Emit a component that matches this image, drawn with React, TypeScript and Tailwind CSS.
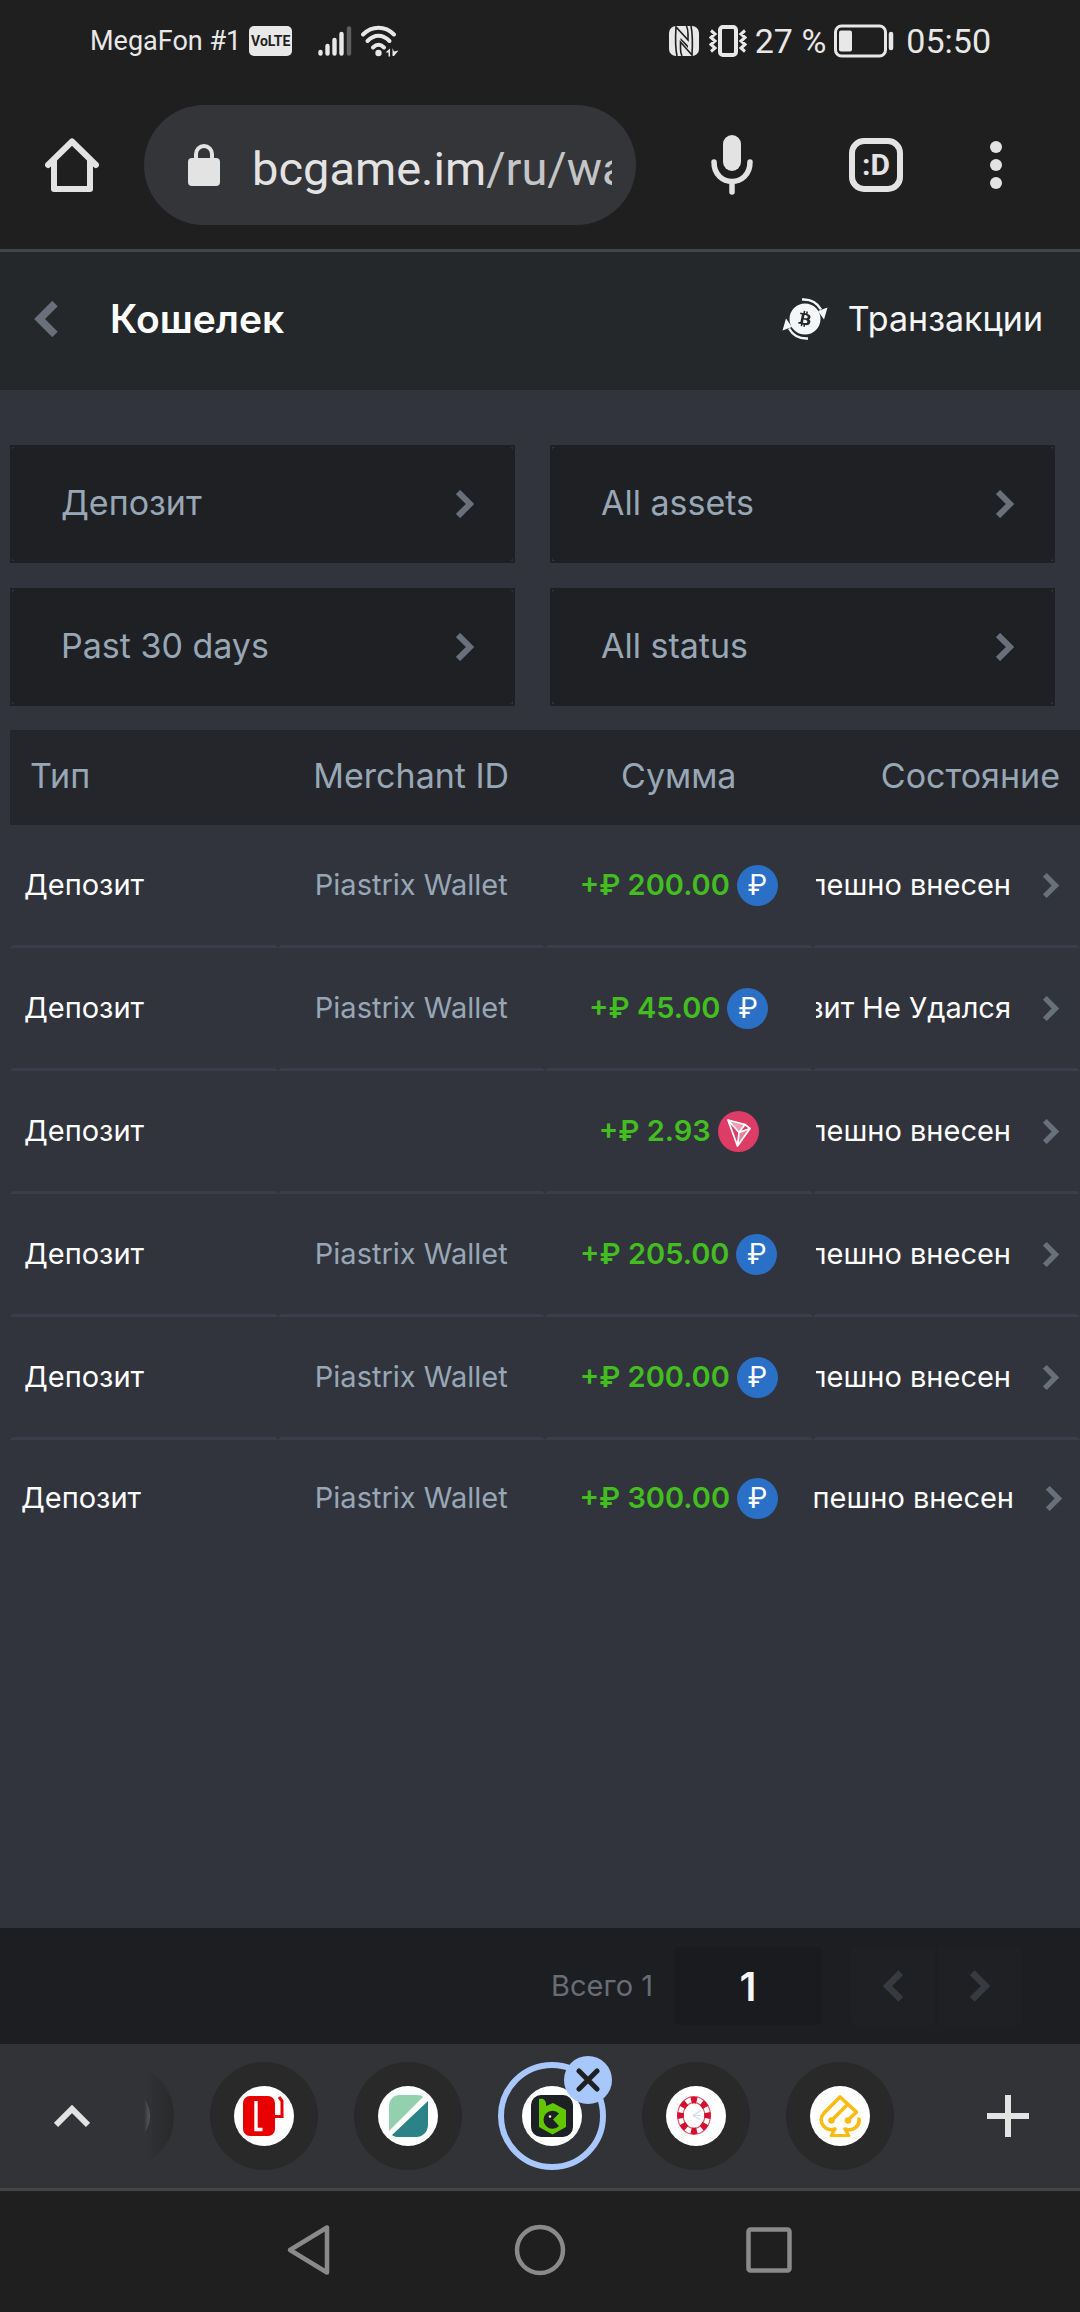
import React from 'react';
import { FaBtc } from 'react-icons/fa';

type Currency = 'rub' | 'trx';

interface Transaction {
  id: number;
  merchant: string;
  amount: string;
  currency: Currency;
  status: string;
}

const transactions: Transaction[] = [
  { id: 1, merchant: 'Piastrix Wallet', amount: '+₽ 200.00', currency: 'rub', status: 'Успешно внесен' },
  { id: 2, merchant: 'Piastrix Wallet', amount: '+₽ 45.00', currency: 'rub', status: 'Депозит Не Удался' },
  { id: 3, merchant: '', amount: '+₽ 2.93', currency: 'trx', status: 'Успешно внесен' },
  { id: 4, merchant: 'Piastrix Wallet', amount: '+₽ 205.00', currency: 'rub', status: 'Успешно внесен' },
  { id: 5, merchant: 'Piastrix Wallet', amount: '+₽ 200.00', currency: 'rub', status: 'Успешно внесен' },
  { id: 6, merchant: 'Piastrix Wallet', amount: '+₽ 300.00', currency: 'rub', status: 'Успешно внесен' },
];

const filters = [
  { name: 'Тип операции', value: 'Депозит' },
  { name: 'Актив', value: 'All assets' },
  { name: 'Период', value: 'Past 30 days' },
  { name: 'Статус', value: 'All status' },
];

const Chevron: React.FC<{ className?: string; left?: boolean }> = ({ className, left }) => (
  <svg viewBox="0 0 18 28" className={className} fill="none" stroke="currentColor" strokeWidth="6" aria-hidden="true">
    <path d={left ? 'M16 2 4 14l12 12' : 'M2 2l12 12L2 26'} />
  </svg>
);

const StatusBar: React.FC = () => (
  <div className="flex h-[57px] items-end justify-between pl-[90px] pr-[89px] text-[#e8e8e8]">
    <div className="flex h-[32px] items-center">
      <span className="text-[27px] leading-8">MegaFon #1</span>
      <span className="ml-2 flex h-[30px] w-[43px] items-center justify-center rounded-[5px] bg-[#e8e8e8] text-[14px] leading-4 font-bold text-[#1f1f1f]">
        VoLTE
      </span>
      <svg className="ml-[26px] h-[32px] w-[34px]" viewBox="0 0 34 32" strokeWidth="4.4" strokeLinecap="round" stroke="currentColor">
        <path d="M2.5 27v1.500M9.500 21v7.500M16.500 15v13.500M23.500 9v19.500" />
        <path d="M31 3.500v25" stroke="#5e5e5e" />
      </svg>
      <svg className="ml-2 h-[32px] w-[40px]" viewBox="0 0 40 32" fill="none" stroke="currentColor" strokeWidth="4" strokeLinecap="round">
        <path d="M3 9.500c9-9 22-9 31 0M7.500 16c7-7 15-7 22 0M13 22.500c3.500-3.500 7.500-3.500 11 0" />
        <circle cx="18.500" cy="28" r="3.200" fill="currentColor" stroke="none" />
        <path d="M25.500 27.500l4.500-4v8h-1.500v-4zM32.500 31v-8l1.500 3.500 4.500-1-4.500 5.500z" fill="currentColor" stroke="none" />
      </svg>
    </div>
    <div className="flex h-[32px] items-center">
      <svg className="h-[32px] w-[32px]" viewBox="0 0 32 32">
        <rect x="1" y="1" width="30" height="30" rx="7" fill="currentColor" />
        <path d="M9 31C7.500 24 7.500 10 8 2l12 13V9c0-3-.5-6-1.500-8M23 1c1.500 7 1.500 21 1 29L12.500 17v7c0 3 .5 5 1.500 7" fill="none" stroke="#1f1f1f" strokeWidth="1.600" />
        <path d="M12.500 13l7.500 7.500v2.500l-7.500-8z" fill="#1f1f1f" />
      </svg>
      <svg className="ml-[9px] h-[32px] w-[38px]" viewBox="0 0 38 32" fill="none" stroke="currentColor" strokeWidth="3">
        <path d="M2 5.500l4 3.500-4 3.500 4 3.500-4 3.500 4 3.500-4 3.500M36 5.500L32 9l4 3.500-4 3.500 4 3.500-4 3.500 4 3.500" />
        <rect x="11" y="2" width="16" height="28" rx="3" strokeWidth="4" />
      </svg>
      <span className="ml-2 text-[34px] leading-8">27 %</span>
      <svg className="ml-2 h-[34px] w-[60px]" viewBox="0 0 60 34" fill="none" stroke="currentColor" strokeWidth="3">
        <rect x="1.500" y="2" width="50" height="30" rx="6" />
        <rect x="5" y="6.500" width="13" height="21" rx="2" fill="currentColor" stroke="none" />
        <path d="M57 10v14" strokeWidth="4.500" strokeLinecap="round" />
      </svg>
      <span className="ml-3 text-[34px] leading-8">05:50</span>
    </div>
  </div>
);

const BrowserBar: React.FC = () => (
  <div className="flex h-[195px] items-center border-b-3 border-[#454545] pt-6 text-[#e3e3e3]">
    <button type="button" aria-label="Home" className="flex w-[144px] shrink-0 justify-center">
      <svg className="h-[54px] w-[54px]" viewBox="0 0 54 54" fill="none" stroke="currentColor" strokeWidth="6" strokeLinejoin="round" strokeLinecap="round">
        <path d="M3 27L27 3.500 51 27M9 22v29h36V22" />
      </svg>
    </button>
    <button type="button" className="flex h-[120px] min-w-0 flex-1 items-center rounded-full bg-[#343539] pr-6 pl-[44px]">
      <svg className="h-[42px] w-[32px] shrink-0" viewBox="0 0 32 42">
        <rect y="14" width="32" height="28" rx="4" fill="currentColor" />
        <path d="M8 15V10a8 8 0 0116 0v5" fill="none" stroke="currentColor" strokeWidth="4" />
      </svg>
      <span className="ml-[32px] overflow-hidden pt-2 text-[47px] leading-[60px] whitespace-nowrap">
        bcgame.im<span className="text-[#c4c5c6]">/ru/wallet</span>
      </span>
    </button>
    <div className="flex shrink-0 items-center pr-9 pl-6">
      <button type="button" aria-label="Voice search" className="flex w-[144px] justify-center">
        <svg className="h-[60px] w-[42px]" viewBox="0 0 42 60" fill="none" stroke="currentColor" strokeWidth="5.500" strokeLinecap="round">
          <rect x="12" width="18" height="36" rx="9" fill="currentColor" stroke="none" />
          <path d="M3 27c0 26 36 26 36 0M21 47v10" />
        </svg>
      </button>
      <button type="button" aria-label="Tabs" className="flex w-[144px] justify-center">
        <span className="flex h-[54px] w-[54px] items-center justify-center rounded-[15px] border-6 border-current text-[30px] leading-8 font-bold">
          :D
        </span>
      </button>
      <button type="button" aria-label="Menu" className="flex w-[96px] justify-center">
        <svg className="h-[48px] w-[12px]" viewBox="0 0 12 48" fill="currentColor">
          <circle cx="6" cy="6" r="6" />
          <circle cx="6" cy="24" r="6" />
          <circle cx="6" cy="42" r="6" />
        </svg>
      </button>
    </div>
  </div>
);

const WalletHeader: React.FC = () => (
  <header className="flex h-[138px] items-center justify-between bg-[#24282b] pr-[37px] pb-1 pl-[34px]">
    <div className="flex items-center gap-[52px]">
      <button type="button" aria-label="Назад" className="text-[#67707b]">
        <Chevron left className="h-[36px] w-[24px]" />
      </button>
      <h1 className="text-[39px] leading-[48px] font-semibold text-white">Кошелек</h1>
    </div>
    <a href="#transactions" className="flex items-center gap-5 text-[34px] leading-[44px] text-[#f5f6f7]">
      <svg className="h-[42px] w-[46px]" viewBox="0 0 46 42">
        <circle cx="23" cy="21" r="15.500" fill="currentColor" />
        <g fill="none" stroke="currentColor" strokeWidth="2.400">
          <path d="M20 1.500c8-.5 15 3 19 10M26 40.500c-8 .5-15-3-19-10" />
        </g>
        <path d="M36 13l9.500-3.500-3.500 12zM10 29L.5 32.500 4 20.500z" fill="currentColor" />
        <g transform="rotate(12 23 21)">
          <FaBtc x="15" y="13" size={16} color="#24282b" />
        </g>
      </svg>
      Транзакции
    </a>
  </header>
);

const FilterSelect: React.FC<{ name: string; value: string }> = ({ name, value }) => (
  <div className="relative border-2 border-[#1f2024] bg-[#34373d]">
    <select
      aria-label={name}
      className="block h-[114px] w-full appearance-none rounded-[4px] bg-[#1f2024] pb-[2px] pl-[49px] text-[34px] leading-[44px] text-[#98a7b5]"
    >
      <option>{value}</option>
    </select>
    <Chevron className="pointer-events-none absolute top-[43px] right-[39px] h-[28px] w-[18px] text-[#67707b]" />
  </div>
);

const CurrencyIcon: React.FC<{ currency: Currency }> = ({ currency }) =>
  currency === 'rub' ? (
    <span className="flex h-[41px] w-[41px] items-center justify-center rounded-full bg-[#2970c6] text-[28px] leading-8 font-normal text-white">
      ₽
    </span>
  ) : (
    <svg className="h-[41px] w-[41px]" viewBox="0 0 41 41">
      <circle cx="20.500" cy="20.500" r="20.500" fill="#dc3c65" />
      <path d="M10 9l18 4-7 8z" fill="#fff" fillOpacity=".5" />
      <path d="M21 21l10-4-11 18z" fill="#fff" fillOpacity=".35" />
      <path d="M10 9l17 4.500 5 4L19.500 35zM10 9l11 12.500L19.500 35M21 21.500l6-8M21 21.500l11-4" fill="none" stroke="#fff" strokeWidth="1.800" strokeLinejoin="round" />
    </svg>
  );

// transparent side borders give the row lines their bevelled breaks
const cell = 'h-[123px] border-x-3 border-b-3 border-x-transparent border-b-[#3b3e4a] p-0 group-last:h-[116px] group-last:border-0';

const TransactionTable: React.FC = () => (
  <table className="w-full table-fixed border-separate border-spacing-0">
    <thead>
      <tr className="h-[95px] bg-[#25262b] text-[34px] leading-[44px] text-[#98a7b5]">
        <th className="p-0 pb-1 pl-5 text-left font-normal">Тип</th>
        <th className="p-0 pb-1 font-normal">Merchant ID</th>
        <th className="p-0 pb-1 font-normal">Сумма</th>
        <th className="p-0 pr-5 pb-1 text-right font-normal">Состояние</th>
      </tr>
    </thead>
    <tbody className="text-[29px] leading-[40px]">
      {transactions.map(tx => (
        <tr key={tx.id} className="group">
          <td className={cell}>
            <span className="pl-[11px] text-white">Депозит</span>
          </td>
          <td className={`${cell} text-center text-[#98a7b5]`}>{tx.merchant}</td>
          <td className={cell}>
            <div className="flex items-center justify-center gap-[7px] font-semibold whitespace-nowrap text-[#43bd20]">
              {tx.amount}
              <CurrencyIcon currency={tx.currency} />
            </div>
          </td>
          <td className={cell}>
            <div className="flex items-center justify-end overflow-hidden pr-[18px] whitespace-nowrap text-white">
              <span>{tx.status}</span>
              <Chevron className="ml-8 h-[25px] w-[16px] shrink-0 text-[#67707b]" />
            </div>
          </td>
        </tr>
      ))}
    </tbody>
  </table>
);

const Pagination: React.FC = () => (
  <div className="flex h-[116px] items-center justify-end bg-[#1d1e22] pr-[58px]">
    <label htmlFor="page" className="text-[29px] leading-[40px] text-[#676d76]">
      Всего 1
    </label>
    <input
      id="page"
      defaultValue="1"
      className="ml-[21px] h-[78px] w-[148px] rounded-[5px] bg-[#1a1b1e] text-center text-[40px] leading-[48px] font-semibold text-[#f5f6f7]"
    />
    <div className="ml-[29px] flex gap-[3px] text-[#373a40]">
      <button type="button" aria-label="Предыдущая страница" className="flex h-[78px] w-[84px] items-center justify-center rounded-l-[5px] bg-[#1f2024]">
        <Chevron left className="h-[32px] w-[20px]" />
      </button>
      <button type="button" aria-label="Следующая страница" className="flex h-[78px] w-[84px] items-center justify-center rounded-r-[5px] bg-[#1f2024]">
        <Chevron className="h-[32px] w-[20px]" />
      </button>
    </div>
  </div>
);

const favicons = {
  lucky: (
    <svg className="h-[42px] w-[42px]" viewBox="0 0 42 42">
      <rect y="1" width="32" height="40" rx="7" fill="#e80000" />
      <path d="M13 6v28.500h6.500" fill="none" stroke="#fff" strokeWidth="3.400" />
      <path d="M30 21.500h9V6l-3-4" fill="none" stroke="#e80000" strokeWidth="3" />
    </svg>
  ),
  leaf: (
    <svg className="h-[42px] w-[42px]" viewBox="0 0 42 42">
      <path d="M2 36V11A11 11 0 0111 0H30q5 0 6 2z" fill="#93d0ae" />
      <path d="M41 6v24a12 12 0 01-12 12H12q-5 0-7-2z" fill="#2b8289" />
    </svg>
  ),
  bcgame: (
    <svg className="h-[42px] w-[42px]" viewBox="0 0 42 42">
      <rect width="42" height="42" rx="10" fill="#1d2024" />
      <path d="M8 4c4-1 7 1 7 5v2l7-3 13 7v17l-13.500 7.500L8 32z" fill="#62c600" />
      <path d="M28 18.500a9 9 0 100 12.500l-6-6.500z" fill="#1d2024" />
      <circle cx="19" cy="21.500" r="1.200" fill="#fff" />
    </svg>
  ),
  chip: (
    <svg className="h-[42px] w-[42px]" viewBox="0 0 42 42" fill="none" stroke="#d3112f">
      <ellipse cx="19" cy="20.500" rx="13.500" ry="15.500" strokeWidth="6.500" pathLength="100" strokeDasharray="6.500 6" strokeDashoffset="3.250" />
      <ellipse cx="19" cy="20.500" rx="16.400" ry="18.800" strokeWidth="1.200" opacity=".7" />
      <ellipse cx="19" cy="20.500" rx="10.800" ry="12.800" strokeWidth="1.200" opacity=".7" />
      <path d="M18 20.500l8-5M18 20.500h8M18 20.500l7 4" stroke="#cfdbe8" strokeWidth="1.200" />
    </svg>
  ),
  spade: (
    <svg className="h-[42px] w-[42px]" viewBox="0 0 42 42" fill="none" stroke="#fdbb12" strokeWidth="3.600" strokeLinecap="round" strokeLinejoin="round">
      <path d="M29 25l8.500-8L21 2 5.500 17.500c-8 8 0 20 10.500 16.500l-3.500 6.500h17L26 34c9 3 15-4 14-10" />
      <path d="M13 25l14-14" />
      <circle cx="12.500" cy="25.500" r="1.500" />
      <circle cx="29" cy="25.500" r="1.500" />
      <path d="M16 38l5-6 5 6z" fill="#fff" stroke="#fff" strokeWidth="1" />
    </svg>
  ),
};

const tabs: { name: string; icon: keyof typeof favicons | null; active?: boolean }[] = [
  { name: 'Вкладка 1', icon: null },
  { name: 'Вкладка 2', icon: 'lucky' },
  { name: 'Вкладка 3', icon: 'leaf' },
  { name: 'BC.Game', icon: 'bcgame', active: true },
  { name: 'Вкладка 5', icon: 'chip' },
  { name: 'Вкладка 6', icon: 'spade' },
];

const TabStrip: React.FC = () => (
  <div className="flex h-[147px] items-center border-b-3 border-[#454545] bg-[#323337] text-[#e3e3e3]">
    <button type="button" aria-label="Развернуть" className="flex w-[144px] shrink-0 justify-center">
      <svg className="h-[24px] w-[36px]" viewBox="0 0 36 24" fill="none" stroke="currentColor" strokeWidth="6">
        <path d="M2 21L18 5l16 16" />
      </svg>
    </button>
    <div className="relative flex h-full flex-1 items-center justify-end gap-9 overflow-hidden pr-[42px]">
      {tabs.map(tab => (
        <div key={tab.name} className="relative shrink-0">
          <button
            type="button"
            aria-label={tab.name}
            className={`flex h-[108px] w-[108px] items-center justify-center rounded-full ${
              tab.active ? 'border-6 border-[#a8c7fa]' : 'bg-[#292929]'
            }`}
          >
            <span className="flex h-[60px] w-[60px] items-center justify-center rounded-full bg-white">
              {tab.icon && favicons[tab.icon]}
            </span>
          </button>
          {tab.active && (
            <button
              type="button"
              aria-label="Закрыть вкладку"
              className="absolute -top-[6px] -right-[6px] flex h-[48px] w-[48px] items-center justify-center rounded-full bg-[#a8c7fa] text-[#1f1f1f]"
            >
              <svg className="h-[24px] w-[24px]" viewBox="0 0 24 24" stroke="currentColor" strokeWidth="5" strokeLinecap="round">
                <path d="M3 3l18 18M21 3L3 21" />
              </svg>
            </button>
          )}
        </div>
      ))}
      <div className="pointer-events-none absolute inset-y-0 left-0 w-8 bg-linear-to-r from-[#323337] to-transparent" />
    </div>
    <button type="button" aria-label="Новая вкладка" className="flex w-[144px] shrink-0 justify-center">
      <svg className="h-[42px] w-[42px]" viewBox="0 0 42 42" stroke="currentColor" strokeWidth="6">
        <path d="M21 0v42M0 21h42" />
      </svg>
    </button>
  </div>
);

const SystemNav: React.FC = () => (
  <nav className="flex h-[121px] items-center justify-center gap-[179px] pb-1 text-[#8a8a8a]">
    <button type="button" aria-label="Back">
      <svg className="h-[52px] w-[52px]" viewBox="0 0 52 52" fill="none" stroke="currentColor" strokeWidth="4.500" strokeLinejoin="round">
        <path d="M44 3.500v45L7 26z" />
      </svg>
    </button>
    <button type="button" aria-label="Home screen">
      <svg className="h-[52px] w-[52px]" viewBox="0 0 52 52" fill="none" stroke="currentColor" strokeWidth="4.500">
        <circle cx="26" cy="26" r="23" />
      </svg>
    </button>
    <button type="button" aria-label="Recent apps">
      <svg className="h-[52px] w-[52px]" viewBox="0 0 52 52" fill="none" stroke="currentColor" strokeWidth="4.500">
        <rect x="3.500" y="5.500" width="41" height="41" rx="2" />
      </svg>
    </button>
  </nav>
);

export default function App() {
  return (
    <div className="flex min-h-screen flex-col bg-[#1f1f1f] font-[Roboto,sans-serif]">
      <StatusBar />
      <BrowserBar />
      <div className="flex flex-1 flex-col bg-[#31343d] font-[Inter,sans-serif]">
        <WalletHeader />
        <main className="flex-1 pl-[10px]">
          <div className="grid grid-cols-2 gap-x-[35px] gap-y-[25px] pt-[55px] pr-[25px] pb-6">
            {filters.map(filter => (
              <FilterSelect key={filter.name} name={filter.name} value={filter.value} />
            ))}
          </div>
          <TransactionTable />
        </main>
        <Pagination />
      </div>
      <TabStrip />
      <SystemNav />
    </div>
  );
}
